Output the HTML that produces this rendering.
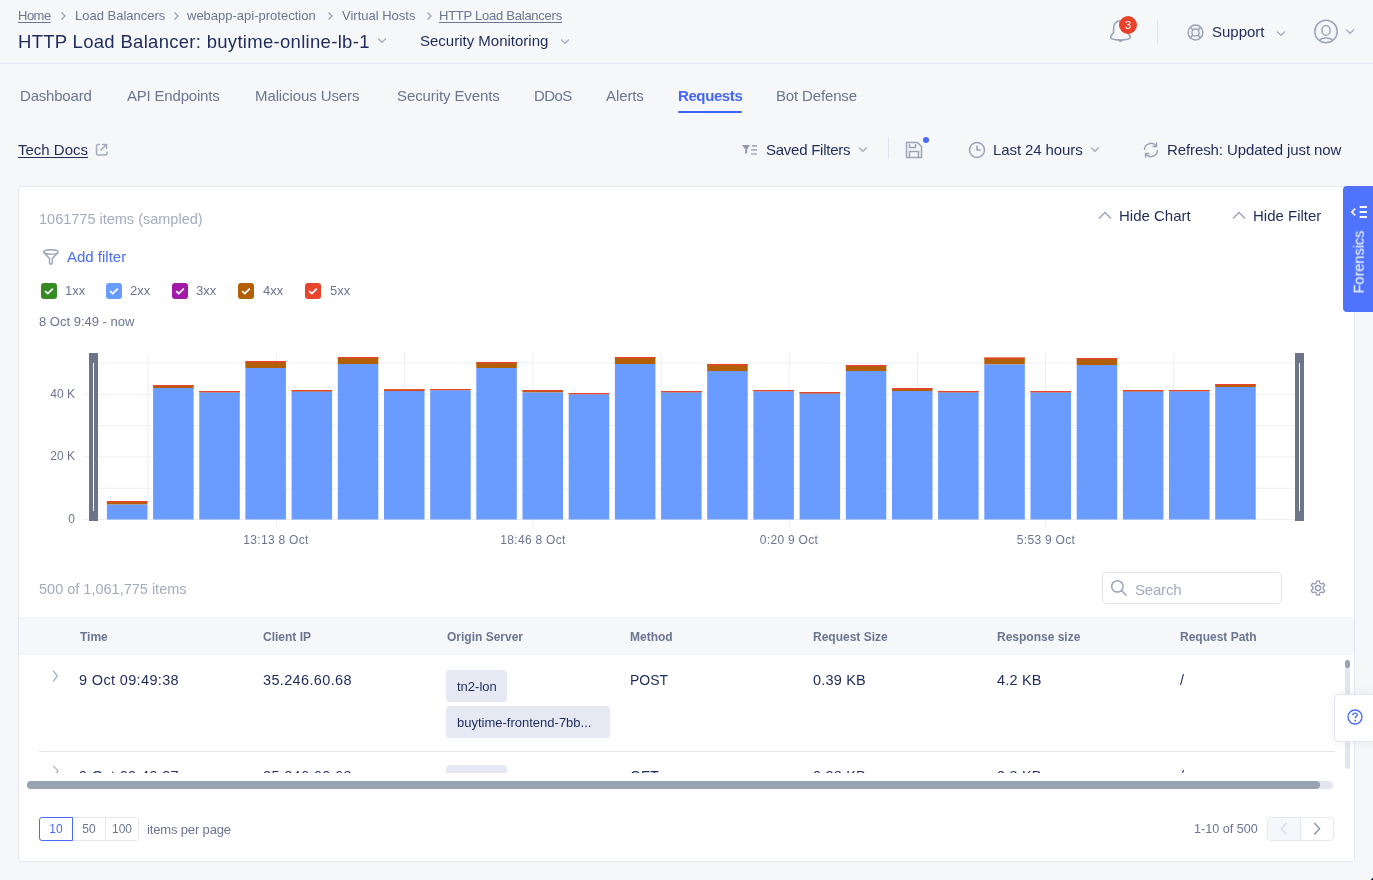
<!DOCTYPE html>
<html><head><meta charset="utf-8">
<style>
*{box-sizing:border-box;margin:0;padding:0}
html,body{width:1373px;height:880px;overflow:hidden;background:#f6f7f9;font-family:"Liberation Sans",sans-serif;color:#1f2b5b}
.a{position:absolute;white-space:nowrap;line-height:1;will-change:transform}
.navy{color:#1f2b5b}
.gray{color:#6b7592}
.lgray{color:#a3abbd}
svg{position:absolute;overflow:visible}
</style></head><body>
<!-- header -->
<div class="a gray" style="left:18px;top:9px;font-size:13px;letter-spacing:-0.5px;text-decoration:underline;text-underline-offset:2px">Home</div>
<svg style="left:60px;top:11px" width="7" height="10" viewBox="0 0 7 10"><path d="M1.5 1.5 L5 5 L1.5 8.5" fill="none" stroke="#9aa3b8" stroke-width="1.3"/></svg>
<div class="a gray" style="left:75px;top:9px;font-size:13px">Load Balancers</div>
<svg style="left:173px;top:11px" width="7" height="10" viewBox="0 0 7 10"><path d="M1.5 1.5 L5 5 L1.5 8.5" fill="none" stroke="#9aa3b8" stroke-width="1.3"/></svg>
<div class="a gray" style="left:187px;top:9px;font-size:13px">webapp-api-protection</div>
<svg style="left:327px;top:11px" width="7" height="10" viewBox="0 0 7 10"><path d="M1.5 1.5 L5 5 L1.5 8.5" fill="none" stroke="#9aa3b8" stroke-width="1.3"/></svg>
<div class="a gray" style="left:342px;top:9px;font-size:13px">Virtual Hosts</div>
<svg style="left:426px;top:11px" width="7" height="10" viewBox="0 0 7 10"><path d="M1.5 1.5 L5 5 L1.5 8.5" fill="none" stroke="#9aa3b8" stroke-width="1.3"/></svg>
<div class="a gray" style="left:439px;top:9px;font-size:13px;letter-spacing:-0.25px;text-decoration:underline;text-underline-offset:2px">HTTP Load Balancers</div>

<div class="a navy" style="left:18px;top:32.5px;font-size:18.5px;letter-spacing:0.3px">HTTP Load Balancer: buytime-online-lb-1</div>
<svg style="left:377px;top:36px" width="10" height="8" viewBox="0 0 10 8"><path d="M1 2.5 L5 6.3 L9 2.5" fill="none" stroke="#a5adc1" stroke-width="1.3"/></svg>
<div class="a navy" style="left:420px;top:33px;font-size:15px">Security Monitoring</div>
<svg style="left:560px;top:37px" width="10" height="8" viewBox="0 0 10 8"><path d="M1 2.5 L5 6.3 L9 2.5" fill="none" stroke="#a5adc1" stroke-width="1.3"/></svg>

<!-- bell -->
<svg style="left:1108px;top:19px" width="26" height="26" viewBox="0 0 26 26"><path d="M12.5 1.8 C8 1.8 5.6 5 5.6 9.5 L5.6 13 C5.6 14.8 2.6 16 2.6 18 C2.6 20.3 7 21 12.5 21 C18 21 22.4 20.3 22.4 18 C22.4 16 19.4 14.8 19.4 13 L19.4 9.5 C19.4 5 17 1.8 12.5 1.8 Z" fill="none" stroke="#9aa3b8" stroke-width="1.6" stroke-linejoin="round"/><path d="M10.2 21.3 Q12.5 24 14.8 21.3 Z" fill="#9aa3b8" stroke="#9aa3b8" stroke-width="1"/></svg>
<div class="a" style="left:1119px;top:16px;width:18px;height:18px;border-radius:50%;background:#e8432a;color:#fff;font-size:11px;text-align:center;line-height:18px">3</div>
<div class="a" style="left:1157px;top:20px;width:1px;height:24px;background:#e2e5ef"></div>
<!-- support -->
<svg style="left:1187px;top:23.5px" width="17" height="17" viewBox="0 0 17 17"><circle cx="8.5" cy="8.5" r="7.4" fill="none" stroke="#9aa3b8" stroke-width="1.5"/><circle cx="8.5" cy="8.5" r="3.6" fill="none" stroke="#9aa3b8" stroke-width="1.5"/><path d="M3.4 3.4 L6 6 M13.6 3.4 L11 6 M3.4 13.6 L6 11 M13.6 13.6 L11 11" stroke="#9aa3b8" stroke-width="1.5"/></svg>
<div class="a navy" style="left:1212px;top:24px;font-size:15px">Support</div>
<svg style="left:1276px;top:29px" width="10" height="8" viewBox="0 0 10 8"><path d="M1 2.5 L5 6.3 L9 2.5" fill="none" stroke="#a5adc1" stroke-width="1.3"/></svg>
<svg style="left:1313px;top:19px" width="26" height="26" viewBox="0 0 26 26"><circle cx="13" cy="12.5" r="11.2" fill="none" stroke="#9aa3b8" stroke-width="1.5"/><ellipse cx="13" cy="11.4" rx="4.1" ry="4.9" fill="none" stroke="#9aa3b8" stroke-width="1.5"/><path d="M6.3 21.6 C9 18.2 17 18.2 19.7 21.6" fill="none" stroke="#9aa3b8" stroke-width="1.5"/></svg>
<svg style="left:1345px;top:27px" width="10" height="8" viewBox="0 0 10 8"><path d="M1 2.5 L5 6.3 L9 2.5" fill="none" stroke="#a5adc1" stroke-width="1.3"/></svg>

<div class="a" style="left:0;top:63px;width:1373px;height:1px;background:#e4e6f1"></div>

<!-- tabs -->
<div class="a gray" style="left:20px;top:88px;font-size:15px;letter-spacing:-0.2px">Dashboard</div>
<div class="a gray" style="left:127px;top:88px;font-size:15px;letter-spacing:-0.2px">API Endpoints</div>
<div class="a gray" style="left:255px;top:88px;font-size:15px;letter-spacing:-0.1px">Malicious Users</div>
<div class="a gray" style="left:397px;top:88px;font-size:15px;letter-spacing:-0.1px">Security Events</div>
<div class="a gray" style="left:534px;top:88px;font-size:15px;letter-spacing:-0.6px">DDoS</div>
<div class="a gray" style="left:606px;top:88px;font-size:15px;letter-spacing:-0.1px">Alerts</div>
<div class="a" style="left:678px;top:88px;font-size:15px;font-weight:bold;color:#4567f8;letter-spacing:-0.4px">Requests</div>
<div class="a" style="left:678px;top:111px;width:64px;height:2.2px;background:#4063fa;border-radius:1px"></div>
<div class="a gray" style="left:776px;top:88px;font-size:15px;letter-spacing:-0.15px">Bot Defense</div>

<!-- toolbar -->
<div class="a navy" style="left:18px;top:142px;font-size:15px;text-decoration:underline;text-underline-offset:2px">Tech Docs</div>
<svg style="left:95px;top:143px" width="13" height="13" viewBox="0 0 13 13"><path d="M5 1.5 H3 A1.5 1.5 0 0 0 1.5 3 V10.5 A1.5 1.5 0 0 0 3 12 H10.5 A1.5 1.5 0 0 0 12 10.5 V8.5" fill="none" stroke="#a3abbd" stroke-width="1.5"/><path d="M7 1.5 H11.5 V6 M11.5 1.5 L5.5 7.5" fill="none" stroke="#a3abbd" stroke-width="1.5"/></svg>

<svg style="left:741px;top:144px" width="17" height="12" viewBox="0 0 17 12"><path d="M0.9 1.1 H9 L6.2 5 V9 L4.2 10 V5 Z" fill="#8f98ad"/><path d="M11 1.9 H16 M10 5.9 H16 M10 10 H16" stroke="#a9b0c4" stroke-width="1.6"/></svg>
<div class="a navy" style="left:766px;top:142px;font-size:15px;letter-spacing:-0.25px">Saved Filters</div>
<svg style="left:858px;top:145px" width="10" height="8" viewBox="0 0 10 8"><path d="M1 2.5 L5 6.3 L9 2.5" fill="none" stroke="#a5adc1" stroke-width="1.3"/></svg>
<div class="a" style="left:888px;top:137px;width:1px;height:22px;background:#e2e5ef"></div>
<svg style="left:905px;top:141px" width="18" height="18" viewBox="0 0 18 18"><path d="M1.5 1.5 H12.5 L16.5 5.5 V16.5 H1.5 Z" fill="none" stroke="#9aa3b8" stroke-width="1.5" stroke-linejoin="round"/><path d="M4.5 3 V6.5 H10.5 V3 M4.5 16.5 V10.5 H13.5 V16.5" fill="none" stroke="#9aa3b8" stroke-width="1.5"/></svg>
<div class="a" style="left:923px;top:137px;width:6px;height:6px;border-radius:50%;background:#4a6cf6"></div>
<svg style="left:968px;top:141px" width="18" height="18" viewBox="0 0 18 18"><circle cx="9" cy="9" r="7.5" fill="none" stroke="#9aa3b8" stroke-width="1.5"/><path d="M9 4.5 V8.9 H12.8" fill="none" stroke="#9aa3b8" stroke-width="1.5"/></svg>
<div class="a navy" style="left:993px;top:142px;font-size:15px;letter-spacing:-0.1px">Last 24 hours</div>
<svg style="left:1090px;top:145px" width="10" height="8" viewBox="0 0 10 8"><path d="M1 2.5 L5 6.3 L9 2.5" fill="none" stroke="#a5adc1" stroke-width="1.3"/></svg>
<svg style="left:1142px;top:141px" width="18" height="18" viewBox="0 0 18 18"><path d="M2.5 9 A6.5 6.5 0 0 1 14 4.8 M15.5 9 A6.5 6.5 0 0 1 4 13.2" fill="none" stroke="#9aa3b8" stroke-width="1.5"/><path d="M14.5 1.5 V5.5 H10.5 M3.5 16.5 V12.5 H7.5" fill="none" stroke="#9aa3b8" stroke-width="1.5"/></svg>
<div class="a navy" style="left:1167px;top:142px;font-size:15px;letter-spacing:-0.1px">Refresh: Updated just now</div>

<!-- card -->
<div class="a" style="left:18px;top:186px;width:1337px;height:676px;background:#fff;border:1px solid #e4e7f1;border-radius:3px"></div>
<div class="a lgray" style="left:39px;top:212px;font-size:14.5px">1061775 items (sampled)</div>
<svg style="left:1098px;top:211px" width="14" height="9" viewBox="0 0 14 9"><path d="M1 7.5 L7 1.5 L13 7.5" fill="none" stroke="#9aa3b8" stroke-width="1.4"/></svg>
<div class="a navy" style="left:1119px;top:208px;font-size:15px">Hide Chart</div>
<svg style="left:1232px;top:211px" width="14" height="9" viewBox="0 0 14 9"><path d="M1 7.5 L7 1.5 L13 7.5" fill="none" stroke="#9aa3b8" stroke-width="1.4"/></svg>
<div class="a navy" style="left:1253px;top:208px;font-size:15px">Hide Filter</div>

<svg style="left:42px;top:248px" width="17" height="17" viewBox="0 0 17 17"><ellipse cx="8.9" cy="3.9" rx="7.2" ry="2.2" fill="none" stroke="#9aa3b8" stroke-width="1.4"/><path d="M1.9 4.6 L7.5 10.5 V14.8 A1.4 1.4 0 0 0 10.3 14.8 V10.5 L15.9 4.6" fill="none" stroke="#9aa3b8" stroke-width="1.4" stroke-linejoin="round"/></svg>
<div class="a" style="left:67px;top:249px;font-size:15px;color:#4a6cf6">Add filter</div>

<div class="a" style="left:41px;top:283px;width:16px;height:16px;border-radius:3px;background:#378a24"></div><svg style="left:41px;top:283px" width="16" height="16" viewBox="0 0 16 16"><path d="M4.2 8.2 L6.8 10.6 L11.8 5.6" fill="none" stroke="#fff" stroke-width="1.8"/></svg><div class="a gray" style="left:65px;top:284px;font-size:13px">1xx</div>
<div class="a" style="left:106px;top:283px;width:16px;height:16px;border-radius:3px;background:#699cfe"></div><svg style="left:106px;top:283px" width="16" height="16" viewBox="0 0 16 16"><path d="M4.2 8.2 L6.8 10.6 L11.8 5.6" fill="none" stroke="#fff" stroke-width="1.8"/></svg><div class="a gray" style="left:130px;top:284px;font-size:13px">2xx</div>
<div class="a" style="left:172px;top:283px;width:16px;height:16px;border-radius:3px;background:#a11aa8"></div><svg style="left:172px;top:283px" width="16" height="16" viewBox="0 0 16 16"><path d="M4.2 8.2 L6.8 10.6 L11.8 5.6" fill="none" stroke="#fff" stroke-width="1.8"/></svg><div class="a gray" style="left:196px;top:284px;font-size:13px">3xx</div>
<div class="a" style="left:238px;top:283px;width:16px;height:16px;border-radius:3px;background:#b35f06"></div><svg style="left:238px;top:283px" width="16" height="16" viewBox="0 0 16 16"><path d="M4.2 8.2 L6.8 10.6 L11.8 5.6" fill="none" stroke="#fff" stroke-width="1.8"/></svg><div class="a gray" style="left:263px;top:284px;font-size:13px">4xx</div>
<div class="a" style="left:305px;top:283px;width:16px;height:16px;border-radius:3px;background:#e8442c"></div><svg style="left:305px;top:283px" width="16" height="16" viewBox="0 0 16 16"><path d="M4.2 8.2 L6.8 10.6 L11.8 5.6" fill="none" stroke="#fff" stroke-width="1.8"/></svg><div class="a gray" style="left:330px;top:284px;font-size:13px">5xx</div>

<div class="a gray" style="left:39px;top:315px;font-size:13px">8 Oct 9:49 - now</div>

<svg style="left:0;top:0" width="1373" height="880" viewBox="0 0 1373 880">
<line x1="83" y1="519.5" x2="1296" y2="519.5" stroke="#eceef4" stroke-width="1"/>
<line x1="98" y1="488.2" x2="1296" y2="488.2" stroke="#eceef4" stroke-width="1"/>
<line x1="83" y1="456.9" x2="1296" y2="456.9" stroke="#eceef4" stroke-width="1"/>
<line x1="98" y1="425.6" x2="1296" y2="425.6" stroke="#eceef4" stroke-width="1"/>
<line x1="83" y1="394.3" x2="1296" y2="394.3" stroke="#eceef4" stroke-width="1"/>
<line x1="98" y1="363.0" x2="1296" y2="363.0" stroke="#eceef4" stroke-width="1"/>
<line x1="148.2" y1="353" x2="148.2" y2="519.5" stroke="#eceef4" stroke-width="1"/>
<line x1="276.4" y1="353" x2="276.4" y2="527" stroke="#eceef4" stroke-width="1"/>
<line x1="404.6" y1="353" x2="404.6" y2="519.5" stroke="#eceef4" stroke-width="1"/>
<line x1="532.8" y1="353" x2="532.8" y2="527" stroke="#eceef4" stroke-width="1"/>
<line x1="661.0" y1="353" x2="661.0" y2="519.5" stroke="#eceef4" stroke-width="1"/>
<line x1="789.2" y1="353" x2="789.2" y2="527" stroke="#eceef4" stroke-width="1"/>
<line x1="917.4" y1="353" x2="917.4" y2="519.5" stroke="#eceef4" stroke-width="1"/>
<line x1="1045.6" y1="353" x2="1045.6" y2="527" stroke="#eceef4" stroke-width="1"/>
<line x1="1173.8" y1="353" x2="1173.8" y2="519.5" stroke="#eceef4" stroke-width="1"/>
<rect x="106.9" y="501.0" width="40.5" height="3.6" fill="#b35f06"/><rect x="106.9" y="501.0" width="40.5" height="1.3" fill="#e8442c"/><rect x="106.9" y="504.6" width="40.5" height="14.9" fill="#699cfe"/>
<rect x="153.1" y="385.0" width="40.5" height="3.0" fill="#b35f06"/><rect x="153.1" y="385.0" width="40.5" height="1.3" fill="#e8442c"/><rect x="153.1" y="388.0" width="40.5" height="131.5" fill="#699cfe"/>
<rect x="199.3" y="391.0" width="40.5" height="1.6" fill="#b35f06"/><rect x="199.3" y="391.0" width="40.5" height="1.3" fill="#e8442c"/><rect x="199.3" y="392.6" width="40.5" height="126.9" fill="#699cfe"/>
<rect x="245.4" y="361.0" width="40.5" height="7.0" fill="#b35f06"/><rect x="245.4" y="361.0" width="40.5" height="1.3" fill="#e8442c"/><rect x="245.4" y="368.0" width="40.5" height="151.5" fill="#699cfe"/>
<rect x="291.6" y="390.0" width="40.5" height="1.7" fill="#b35f06"/><rect x="291.6" y="390.0" width="40.5" height="1.3" fill="#e8442c"/><rect x="291.6" y="391.7" width="40.5" height="127.8" fill="#699cfe"/>
<rect x="337.8" y="357.0" width="40.5" height="7.0" fill="#b35f06"/><rect x="337.8" y="357.0" width="40.5" height="1.3" fill="#e8442c"/><rect x="337.8" y="364.0" width="40.5" height="155.5" fill="#699cfe"/>
<rect x="384.0" y="389.3" width="40.5" height="1.7" fill="#b35f06"/><rect x="384.0" y="389.3" width="40.5" height="1.3" fill="#e8442c"/><rect x="384.0" y="391.0" width="40.5" height="128.5" fill="#699cfe"/>
<rect x="430.2" y="389.0" width="40.5" height="1.3" fill="#b35f06"/><rect x="430.2" y="389.0" width="40.5" height="1.3" fill="#e8442c"/><rect x="430.2" y="390.3" width="40.5" height="129.2" fill="#699cfe"/>
<rect x="476.3" y="362.0" width="40.5" height="6.0" fill="#b35f06"/><rect x="476.3" y="362.0" width="40.5" height="1.3" fill="#e8442c"/><rect x="476.3" y="368.0" width="40.5" height="151.5" fill="#699cfe"/>
<rect x="522.5" y="390.0" width="40.5" height="2.5" fill="#b35f06"/><rect x="522.5" y="390.0" width="40.5" height="1.3" fill="#e8442c"/><rect x="522.5" y="392.5" width="40.5" height="127.0" fill="#699cfe"/>
<rect x="568.7" y="393.0" width="40.5" height="1.5" fill="#b35f06"/><rect x="568.7" y="393.0" width="40.5" height="1.3" fill="#e8442c"/><rect x="568.7" y="394.5" width="40.5" height="125.0" fill="#699cfe"/>
<rect x="614.9" y="357.0" width="40.5" height="7.0" fill="#b35f06"/><rect x="614.9" y="357.0" width="40.5" height="1.3" fill="#e8442c"/><rect x="614.9" y="364.0" width="40.5" height="155.5" fill="#699cfe"/>
<rect x="661.1" y="391.0" width="40.5" height="1.6" fill="#b35f06"/><rect x="661.1" y="391.0" width="40.5" height="1.3" fill="#e8442c"/><rect x="661.1" y="392.6" width="40.5" height="126.9" fill="#699cfe"/>
<rect x="707.2" y="364.0" width="40.5" height="7.0" fill="#b35f06"/><rect x="707.2" y="364.0" width="40.5" height="1.3" fill="#e8442c"/><rect x="707.2" y="371.0" width="40.5" height="148.5" fill="#699cfe"/>
<rect x="753.4" y="390.0" width="40.5" height="1.5" fill="#b35f06"/><rect x="753.4" y="390.0" width="40.5" height="1.3" fill="#e8442c"/><rect x="753.4" y="391.5" width="40.5" height="128.0" fill="#699cfe"/>
<rect x="799.6" y="392.0" width="40.5" height="1.7" fill="#b35f06"/><rect x="799.6" y="392.0" width="40.5" height="1.3" fill="#e8442c"/><rect x="799.6" y="393.7" width="40.5" height="125.8" fill="#699cfe"/>
<rect x="845.8" y="365.0" width="40.5" height="6.0" fill="#b35f06"/><rect x="845.8" y="365.0" width="40.5" height="1.3" fill="#e8442c"/><rect x="845.8" y="371.0" width="40.5" height="148.5" fill="#699cfe"/>
<rect x="892.0" y="388.0" width="40.5" height="3.0" fill="#b35f06"/><rect x="892.0" y="388.0" width="40.5" height="1.3" fill="#e8442c"/><rect x="892.0" y="391.0" width="40.5" height="128.5" fill="#699cfe"/>
<rect x="938.1" y="391.0" width="40.5" height="1.6" fill="#b35f06"/><rect x="938.1" y="391.0" width="40.5" height="1.3" fill="#e8442c"/><rect x="938.1" y="392.6" width="40.5" height="126.9" fill="#699cfe"/>
<rect x="984.3" y="357.6" width="40.5" height="6.9" fill="#b35f06"/><rect x="984.3" y="357.6" width="40.5" height="1.3" fill="#e8442c"/><rect x="984.3" y="364.5" width="40.5" height="155.0" fill="#699cfe"/>
<rect x="1030.5" y="391.0" width="40.5" height="1.6" fill="#b35f06"/><rect x="1030.5" y="391.0" width="40.5" height="1.3" fill="#e8442c"/><rect x="1030.5" y="392.6" width="40.5" height="126.9" fill="#699cfe"/>
<rect x="1076.7" y="358.0" width="40.5" height="7.0" fill="#b35f06"/><rect x="1076.7" y="358.0" width="40.5" height="1.3" fill="#e8442c"/><rect x="1076.7" y="365.0" width="40.5" height="154.5" fill="#699cfe"/>
<rect x="1122.9" y="390.0" width="40.5" height="1.7" fill="#b35f06"/><rect x="1122.9" y="390.0" width="40.5" height="1.3" fill="#e8442c"/><rect x="1122.9" y="391.7" width="40.5" height="127.8" fill="#699cfe"/>
<rect x="1169.0" y="390.0" width="40.5" height="1.5" fill="#b35f06"/><rect x="1169.0" y="390.0" width="40.5" height="1.3" fill="#e8442c"/><rect x="1169.0" y="391.5" width="40.5" height="128.0" fill="#699cfe"/>
<rect x="1215.2" y="384.0" width="40.5" height="3.0" fill="#b35f06"/><rect x="1215.2" y="384.0" width="40.5" height="1.3" fill="#e8442c"/><rect x="1215.2" y="387.0" width="40.5" height="132.5" fill="#699cfe"/>
<rect x="89" y="353" width="9" height="168" fill="#6b7488"/>
<rect x="93" y="363" width="1" height="148" fill="#fff"/>
<rect x="1295" y="353" width="9" height="168" fill="#6b7488"/>
<rect x="1299" y="363" width="1" height="148" fill="#fff"/>
</svg>
<div class="a gray" style="left:48px;top:388px;font-size:12px;width:27px;text-align:right">40 K</div>
<div class="a gray" style="left:48px;top:450px;font-size:12px;width:27px;text-align:right">20 K</div>
<div class="a gray" style="left:48px;top:513px;font-size:12px;width:27px;text-align:right">0</div>
<div class="a gray" style="left:226px;top:534px;font-size:12px;width:100px;text-align:center;letter-spacing:0.3px">13:13 8 Oct</div>
<div class="a gray" style="left:483px;top:534px;font-size:12px;width:100px;text-align:center;letter-spacing:0.3px">18:46 8 Oct</div>
<div class="a gray" style="left:739px;top:534px;font-size:12px;width:100px;text-align:center;letter-spacing:0.3px">0:20 9 Oct</div>
<div class="a gray" style="left:996px;top:534px;font-size:12px;width:100px;text-align:center;letter-spacing:0.3px">5:53 9 Oct</div>

<!-- forensics -->
<div class="a" style="left:1343px;top:186px;width:30px;height:126px;background:#4f73fc;border-radius:4px 0 0 4px"></div>
<svg style="left:1350px;top:205px" width="18" height="14" viewBox="0 0 18 14"><path d="M5.2 3.6 L1.8 7 L5.2 10.4" fill="none" stroke="#fff" stroke-width="1.7"/><path d="M9.6 2 H16.9 M9.6 7 H16.9 M9.6 12 H16.9" stroke="#fff" stroke-width="1.8"/></svg>
<div class="a" style="left:1359px;top:262px;font-size:14.5px;color:#fff;transform:translate(-50%,-50%) rotate(-90deg);transform-origin:center;">Forensics</div>

<!-- table -->
<div class="a lgray" style="left:39px;top:582px;font-size:14.5px">500 of 1,061,775 items</div>
<div class="a" style="left:1102px;top:572px;width:180px;height:32px;border:1px solid #dfe3ee;border-radius:4px;background:#fff"></div>
<svg style="left:1110px;top:580px" width="17" height="16" viewBox="0 0 17 16"><circle cx="7.4" cy="6.4" r="5.7" fill="none" stroke="#9aa3b8" stroke-width="1.5"/><path d="M11.5 10.5 L16 15.2" stroke="#9aa3b8" stroke-width="1.5" stroke-linecap="round"/></svg>
<div class="a lgray" style="left:1135px;top:581.5px;font-size:15px;letter-spacing:-0.2px">Search</div>
<svg style="left:1309px;top:579px" width="18" height="18" viewBox="0 0 24 24"><path d="M12 8.5 A3.5 3.5 0 1 0 12 15.5 A3.5 3.5 0 1 0 12 8.5 Z" fill="none" stroke="#959db2" stroke-width="2"/><path d="M10.3 2.5 H13.7 L14.3 5.3 L16.6 6.6 L19.3 5.7 L21 8.6 L18.9 10.5 V13.5 L21 15.4 L19.3 18.3 L16.6 17.4 L14.3 18.7 L13.7 21.5 H10.3 L9.7 18.7 L7.4 17.4 L4.7 18.3 L3 15.4 L5.1 13.5 V10.5 L3 8.6 L4.7 5.7 L7.4 6.6 L9.7 5.3 Z" fill="none" stroke="#959db2" stroke-width="1.8" stroke-linejoin="round"/></svg>

<div class="a" style="left:19px;top:617px;width:1335px;height:38px;background:#f6f7f9"></div>
<div class="a gray" style="left:79.6px;top:631px;font-size:12px;font-weight:bold">Time</div>
<div class="a gray" style="left:262.7px;top:631px;font-size:12px;font-weight:bold">Client IP</div>
<div class="a gray" style="left:446.6px;top:631px;font-size:12px;font-weight:bold">Origin Server</div>
<div class="a gray" style="left:629.9px;top:631px;font-size:12px;font-weight:bold">Method</div>
<div class="a gray" style="left:813.4px;top:631px;font-size:12px;font-weight:bold">Request Size</div>
<div class="a gray" style="left:996.6px;top:631px;font-size:12px;font-weight:bold">Response size</div>
<div class="a gray" style="left:1180.2px;top:631px;font-size:12px;font-weight:bold">Request Path</div>

<div class="a" style="left:19px;top:655px;width:1316px;height:118px;overflow:hidden">
 <div style="position:absolute;left:0;top:0;width:1316px;height:118px">
 <svg style="left:33px;top:14.5px" width="8" height="13" viewBox="0 0 8 13"><path d="M1.2 0.8 L5.3 6 L1.2 11.5" fill="none" stroke="#9aa3b8" stroke-width="1.2"/></svg>
 <div class="a navy" style="left:60px;top:18px;font-size:14.5px;letter-spacing:0.35px">9 Oct 09:49:38</div>
 <div class="a navy" style="left:244px;top:18px;font-size:14.5px;letter-spacing:0.35px">35.246.60.68</div>
 <div class="a" style="left:427px;top:15px;width:61px;height:32px;background:#e6e9f4;border-radius:4px"></div>
 <div class="a navy" style="left:438px;top:25px;font-size:13px">tn2-lon</div>
 <div class="a" style="left:427px;top:51px;width:164px;height:32px;background:#e6e9f4;border-radius:4px"></div>
 <div class="a navy" style="left:438px;top:61px;font-size:13px">buytime-frontend-7bb...</div>
 <div class="a navy" style="left:611px;top:18px;font-size:14px">POST</div>
 <div class="a navy" style="left:794px;top:18px;font-size:14.5px;letter-spacing:0.2px">0.39 KB</div>
 <div class="a navy" style="left:978px;top:18px;font-size:14.5px;letter-spacing:0.2px">4.2 KB</div>
 <div class="a navy" style="left:1161px;top:18px;font-size:14.5px">/</div>
 <div class="a" style="left:20px;top:96px;width:1296px;height:1px;background:#e3e6f0"></div>
 <svg style="left:33px;top:110px" width="8" height="13" viewBox="0 0 8 13"><path d="M1.5 1 L6 6 L1.5 11" fill="none" stroke="#9aa3b8" stroke-width="1.1"/></svg>
 <div class="a navy" style="left:60px;top:114px;font-size:14.5px;letter-spacing:0.35px">9 Oct 09:49:37</div>
 <div class="a navy" style="left:244px;top:114px;font-size:14.5px;letter-spacing:0.35px">35.246.60.68</div>
 <div class="a" style="left:427px;top:110px;width:61px;height:32px;background:#e6e9f4;border-radius:4px"></div>
 <div class="a navy" style="left:611px;top:114px;font-size:14px">GET</div>
 <div class="a navy" style="left:794px;top:114px;font-size:14.5px;letter-spacing:0.2px">0.38 KB</div>
 <div class="a navy" style="left:978px;top:114px;font-size:14.5px;letter-spacing:0.2px">3.8 KB</div>
 <div class="a navy" style="left:1161px;top:114px;font-size:14.5px">/</div>
 </div>
</div>
<!-- vertical scrollbar -->
<div class="a" style="left:1345px;top:660px;width:5px;height:109px;background:#e3e6f0;border-radius:3px"></div>
<div class="a" style="left:1345px;top:660px;width:5px;height:8px;background:#9aa3b4;border-radius:3px"></div>
<!-- horizontal scrollbar -->
<div class="a" style="left:27px;top:781px;width:1306px;height:8px;background:#e3e6f0;border-radius:4px"></div>
<div class="a" style="left:27px;top:781px;width:1293px;height:8px;background:#9aa3b4;border-radius:4px"></div>

<!-- help -->
<div class="a" style="left:1334px;top:694px;width:45px;height:48px;background:#fff;border:1px solid #e4e7f1;border-radius:5px;box-shadow:0 0 12px rgba(30,40,90,0.08)"></div>
<svg style="left:1347px;top:709px" width="16" height="16" viewBox="0 0 16 16"><circle cx="8" cy="8" r="7" fill="none" stroke="#4a6cf6" stroke-width="1.4"/><path d="M5.8 6.2 C5.8 4.8 6.8 4.1 8 4.1 C9.3 4.1 10.2 4.9 10.2 6 C10.2 7.3 8.2 7.6 8.2 9.2" fill="none" stroke="#4a6cf6" stroke-width="1.4"/><circle cx="8.2" cy="11.6" r="0.9" fill="#4a6cf6"/></svg>

<!-- pagination -->
<div class="a" style="left:39px;top:817px;width:100px;height:24px;border:1px solid #e4e7f1;border-radius:3px;background:#fff"></div>
<div class="a" style="left:72px;top:817px;width:1px;height:24px;background:#e4e7f1"></div>
<div class="a" style="left:105px;top:817px;width:1px;height:24px;background:#e4e7f1"></div>
<div class="a" style="left:39px;top:817px;width:34px;height:24px;border:1px solid #4a6cf6;border-radius:3px 0 0 3px"></div>
<div class="a" style="left:39px;top:823px;width:34px;font-size:12px;text-align:center;color:#4a6cf6">10</div>
<div class="a gray" style="left:72px;top:823px;width:34px;font-size:12px;text-align:center">50</div>
<div class="a gray" style="left:105px;top:823px;width:34px;font-size:12px;text-align:center">100</div>
<div class="a gray" style="left:147px;top:823px;font-size:13px;letter-spacing:-0.15px">items per page</div>

<div class="a gray" style="left:1194px;top:823px;font-size:12.6px">1-10 of 500</div>
<div class="a" style="left:1267px;top:817px;width:67px;height:24px;border:1px solid #e4e7f1;border-radius:4px;background:#fff;overflow:hidden"><div style="position:absolute;left:0;top:0;width:33px;height:24px;background:#f6f7fa;border-right:1px solid #e4e7f1"></div></div>
<svg style="left:1280px;top:822px" width="8" height="14" viewBox="0 0 8 14"><path d="M6.5 1 L1.2 6.8 L6.5 12.5" fill="none" stroke="#d5d9e8" stroke-width="1.2"/></svg>
<svg style="left:1313px;top:822px" width="8" height="14" viewBox="0 0 8 14"><path d="M1.3 1 L6.6 6.8 L1.3 12.5" fill="none" stroke="#8a93ab" stroke-width="1.4"/></svg>

<div class="a" style="left:1365px;top:872px;width:46px;height:46px;border-radius:50%;background:#0b1a55"></div>
</body></html>
